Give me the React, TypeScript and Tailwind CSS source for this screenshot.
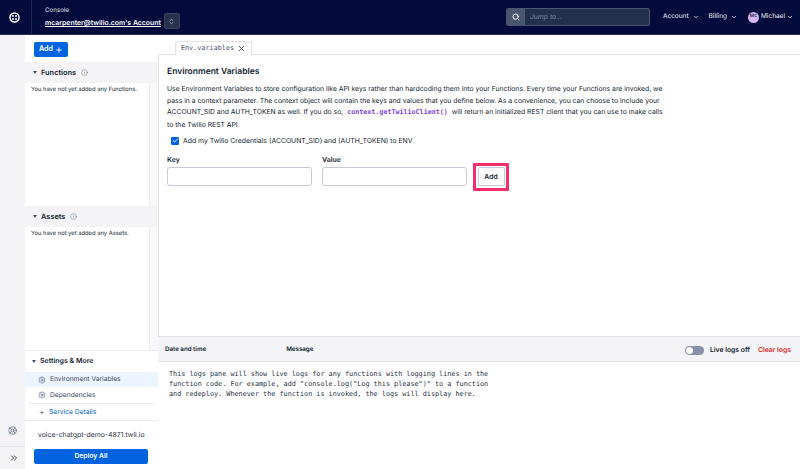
import React from "react";
import { ChevronDown, ChevronsRight, ChevronsUpDown, Info, LifeBuoy, Plus, Search, Settings, X, ArrowRight, Check } from "lucide-react";

function Section({ title, info }: { title: string; info?: boolean }) {
  return (
    <div className="h-[21px] flex items-center pl-[8px] gap-[3px] bg-[#f4f4f6] shrink-0">
      <span className="w-0 h-0 border-x-[2.5px] border-x-transparent border-t-[3px] border-t-[#4b5064] mr-[1px]" />
      <span className="text-[7.4px] font-semibold text-[#121c2d]">{title}</span>
      {info && <Info size={7} strokeWidth={1.5} className="text-[#606b85] ml-[2px]" />}
    </div>
  );
}

function EmptyList({ text }: { text: string }) {
  return (
    <div className="flex-1 flex min-h-0">
      <div className="flex-1 bg-white pl-[6px] pt-[1px] text-[5.8px] leading-[11px] text-[#121c2d] whitespace-nowrap">{text}</div>
      <div className="w-[9px] bg-[#f8f8fa] border-l border-[#eeeef2]" />
    </div>
  );
}

export default function App() {
  return (
    <div className="w-[800px] h-[469px] overflow-hidden flex flex-col bg-white text-[#121c2d] font-['Inter',sans-serif] [text-rendering:geometricPrecision]">
      <header className="h-[35px] shrink-0 bg-[#030b3d] border-b border-[#2a2b55] flex items-center text-white">
        <div className="w-[32px] h-full flex items-center justify-center border-r border-[#1c2350]">
          <svg width="11" height="11" viewBox="0 0 22 22" fill="none" className="mr-[2px]">
            <circle cx="11" cy="11" r="9" stroke="white" strokeWidth="3" />
            <circle cx="8" cy="8" r="2" fill="white" />
            <circle cx="14" cy="8" r="2" fill="white" />
            <circle cx="8" cy="14" r="2" fill="white" />
            <circle cx="14" cy="14" r="2" fill="white" />
          </svg>
        </div>
        <div className="ml-[13px] flex flex-col gap-[4px]">
          <span className="text-[6.2px] leading-[7px] text-[#e1e3ea]">Console</span>
          <span className="text-[6.9px] leading-[9px] font-semibold underline whitespace-nowrap">mcarpenter@twilio.com's Account</span>
        </div>
        <button className="ml-[3px] mt-[8px] w-[16px] h-[16px] rounded-[2px] bg-[#27324f] border border-[#39435f] flex items-center justify-center">
          <ChevronsUpDown size={7} className="text-[#dfe2ea]" />
        </button>
        <div className="ml-auto flex items-center">
          <div className="w-[144px] h-[18px] rounded-[2px] border border-[#4a556e] bg-[#21304d] flex items-center">
            <div className="w-[18px] h-full bg-[#4a566e] flex items-center justify-center rounded-l-[2px]">
              <Search size={8} strokeWidth={3} />
            </div>
            <span className="ml-[5px] text-[6.8px] italic text-[#7e8aa3]">Jump to...</span>
          </div>
          <span className="ml-[13px] text-[6.5px] text-[#e8eaf0]">Account</span>
          <ChevronDown size={6} strokeWidth={3} className="ml-[4px]" />
          <span className="ml-[10px] text-[6.5px] text-[#e8eaf0]">Billing</span>
          <ChevronDown size={6} strokeWidth={3} className="ml-[4px]" />
          <span className="ml-[11px] w-[11px] h-[11px] rounded-full bg-[#d6b5f2] flex items-center justify-center text-[4.5px] font-semibold text-[#121c2d]">MC</span>
          <span className="ml-[2px] text-[6.5px] text-[#e8eaf0]">Michael</span>
          <ChevronDown size={6} strokeWidth={3} className="ml-[2px] mr-[7px]" />
        </div>
      </header>

      <div className="flex-1 flex min-h-0">
        <aside className="w-[25px] shrink-0 bg-[#f4f4f6] flex flex-col justify-end items-center">
          <LifeBuoy size={9} className="text-[#606b85] mb-[11px]" />
          <div className="w-full border-t border-[#e1e3ea] h-[23px] flex items-center justify-center">
            <ChevronsRight size={10} strokeWidth={2} className="text-[#121c2d] ml-[2px]" />
          </div>
        </aside>

        <nav className="w-[133px] shrink-0 flex flex-col bg-white">
          <div className="h-[27px] shrink-0 pl-[9px] pt-[7px]">
            <button className="h-[15px] w-[34px] rounded-[2px] bg-[#0263e0] text-white text-[7.2px] font-semibold flex items-center justify-center gap-[2px]">
              Add <Plus size={8} strokeWidth={2.5} />
            </button>
          </div>
          <Section title="Functions" info />
          <EmptyList text="You have not yet added any Functions." />
          <Section title="Assets" info />
          <EmptyList text="You have not yet added any Assets." />
          <div className="h-[22px] shrink-0 flex items-center gap-[3px] pl-[7px] border-t border-[#eeeef2]">
            <span className="w-0 h-0 border-x-[2.5px] border-x-transparent border-t-[3px] border-t-[#4b5064] mr-[1px]" />
            <span className="text-[7px] font-semibold whitespace-nowrap">Settings &amp; More</span>
          </div>
          <div className="h-[15px] shrink-0 bg-[#ebf4ff] flex items-center pl-[13px] gap-[4px] text-[6.7px] text-[#394762] whitespace-nowrap">
            <Settings size={8} className="text-[#606b85]" /> Environment Variables
          </div>
          <div className="h-[16px] shrink-0 flex items-center pl-[13px] gap-[4px] text-[6.7px] text-[#394762]">
            <Settings size={8} className="text-[#606b85]" /> Dependencies
          </div>
          <div className="mx-[4px] border-t border-[#e8e9ef]" />
          <div className="h-[17px] shrink-0 flex items-center pl-[14px] gap-[5px] text-[6.7px] text-[#0263e0] border-b border-[#e8e9ef]">
            <ArrowRight size={5} strokeWidth={3} className="text-[#394762]" /> Service Details
          </div>
          <div className="h-[28px] shrink-0 flex items-center pl-[13px] text-[6.9px] text-[#283042] whitespace-nowrap">voice-chatgpt-demo-4871.twil.io</div>
          <div className="px-[9px] pb-[5px]">
            <button className="block w-[114px] h-[15px] rounded-[2px] bg-[#0263e0] text-white text-[6.8px] font-semibold">Deploy All</button>
          </div>
        </nav>

        <main className="flex-1 flex flex-col min-w-0">
          <div className="h-[20px] shrink-0 pl-[17px] flex items-end border-b border-[#e1e3ea]">
            <div className="h-[14px] w-[77px] -mb-[1px] bg-white border border-b-0 border-[#e1e3ea] rounded-t-[2px] flex items-center justify-center gap-[3px]">
              <span className="font-['DejaVu_Sans_Mono',monospace] text-[6.8px] text-[#4b5671]">Env.variables</span>
              <X size={9} strokeWidth={2.5} className="text-[#394762]" />
            </div>
          </div>

          <section className="flex-1 min-h-0 pl-[8px] pt-[12px] border-l border-[#e1e3ea]">
            <h2 className="text-[8.5px] leading-[11px] font-semibold">Environment Variables</h2>
            <p className="mt-[5px] w-[500px] text-[6.8px] leading-[11.7px] text-[#121c2d] whitespace-nowrap">
              Use Environment Variables to store configuration like API keys rather than hardcoding them into your Functions. Every time your Functions are invoked, we<br />
              pass in a context parameter. The context object will contain the keys and values that you define below. As a convenience, you can choose to include your<br />
              ACCOUNT_SID and AUTH_TOKEN as well. If you do so,{" "}
              <code className="font-['DejaVu_Sans_Mono',monospace] text-[6.7px] font-semibold text-[#7b3fe4] mx-[2px]">context.getTwilioClient()</code>{" "}
              will return an initialized REST client that you can use to make calls<br />
              to the Twilio REST API.
            </p>
            <label className="mt-[5px] ml-[4px] flex items-center gap-[4px] text-[6.85px] leading-[10px]">
              <span className="w-[8px] h-[8px] rounded-[1px] bg-[#0263e0] flex items-center justify-center">
                <Check size={7} strokeWidth={3} className="text-white" />
              </span>
              Add my Twilio Credentials (ACCOUNT_SID) and (AUTH_TOKEN) to ENV
            </label>
            <div className="mt-[9px] flex items-end">
              <div className="w-[145px]">
                <div className="text-[7px] leading-[9px] font-semibold mb-[3px]">Key</div>
                <div className="h-[19px] rounded-[3px] border border-[#c6c9d6] bg-white" />
              </div>
              <div className="ml-[10px] w-[145px]">
                <div className="text-[7px] leading-[9px] font-semibold mb-[3px]">Value</div>
                <div className="h-[19px] rounded-[3px] border border-[#c6c9d6] bg-white" />
              </div>
              <div className="ml-[6px] -mb-[5px] w-[36px] h-[28px] border-[3px] border-[#f22f6a] rounded-[1px] flex items-center justify-center">
                <button className="w-[27px] h-[19px] rounded-[2px] border border-[#c6c9d6] bg-white text-[6.8px] font-semibold">Add</button>
              </div>
            </div>
          </section>

          <div className="h-[26px] shrink-0 bg-[#f4f4f6] border-y border-[#e1e3ea] flex items-center pl-[7px] pr-[9px] pt-[2px] text-[6.2px] font-semibold">
            <span>Date and time</span>
            <span className="ml-[80px]">Message</span>
            <span className="ml-auto w-[19px] h-[9px] rounded-full bg-[#8891aa] flex items-center pl-[1px]">
              <span className="w-[7px] h-[7px] rounded-full bg-white" />
            </span>
            <span className="ml-[6px] text-[6.8px]">Live logs off</span>
            <span className="ml-[8px] text-[6.8px] text-[#e02c2c]">Clear logs</span>
          </div>
          <div className="h-[107px] shrink-0 pl-[11px] pt-[7px] font-['DejaVu_Sans_Mono',monospace] text-[6.8px] leading-[10px] text-[#283042] whitespace-pre">
            {`This logs pane will show live logs for any functions with logging lines in the
function code. For example, add "console.log("Log this please")" to a function
and redeploy. Whenever the function is invoked, the logs will display here.`}
          </div>
        </main>
      </div>
    </div>
  );
}
